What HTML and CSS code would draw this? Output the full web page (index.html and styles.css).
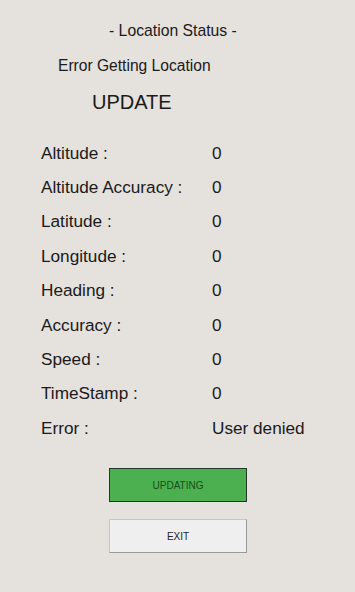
FILE: index.html
```html
<!DOCTYPE html>
<html>
<head>
<meta charset="utf-8">
<link rel="stylesheet" href="styles.css">
</head>
<body>
<div class="page">
  <div class="title">- Location Status -</div>
  <div class="status">Error Getting Location</div>
  <div class="update">UPDATE</div>
  <div class="rows">
    <div class="row"><span class="label">Altitude :</span><span class="value">0</span></div>
    <div class="row"><span class="label">Altitude Accuracy :</span><span class="value">0</span></div>
    <div class="row"><span class="label">Latitude :</span><span class="value">0</span></div>
    <div class="row"><span class="label">Longitude :</span><span class="value">0</span></div>
    <div class="row"><span class="label">Heading :</span><span class="value">0</span></div>
    <div class="row"><span class="label">Accuracy :</span><span class="value">0</span></div>
    <div class="row"><span class="label">Speed :</span><span class="value">0</span></div>
    <div class="row"><span class="label">TimeStamp :</span><span class="value">0</span></div>
    <div class="row"><span class="label">Error :</span><span class="value">User denied</span></div>
  </div>
  <div class="buttons">
    <button class="btn btn-green">UPDATING</button>
    <button class="btn btn-light">EXIT</button>
  </div>
</div>
</body>
</html>
```

FILE: styles.css
```css
html, body {
  margin: 0;
  padding: 0;
  background: #e5e1dd;
}
body {
  font-family: "Liberation Sans", Arial, sans-serif;
  color: #1a1a1a;
  width: 355px;
  height: 592px;
}
.page {
  display: flex;
  flex-direction: column;
}
.title {
  font-size: 15.75px;
  line-height: 20px;
  margin-top: 21px;
  padding-left: 109px;
}
.status {
  font-size: 15.6px;
  line-height: 20px;
  margin-top: 15px;
  padding-left: 58px;
}
.update {
  font-size: 20px;
  line-height: 24px;
  margin-top: 14px;
  padding-left: 92px;
}
.rows {
  margin-top: 22px;
  display: flex;
  flex-direction: column;
}
.row {
  height: 34.375px;
  display: flex;
  align-items: center;
  font-size: 17.2px;
  padding-left: 41px;
}
.label {
  width: 171px;
}
.value {
  flex: 1;
}
.buttons {
  margin-top: 23px;
  display: flex;
  flex-direction: column;
  align-items: flex-start;
  padding-left: 109px;
  gap: 17px;
}
.btn {
  width: 138px;
  height: 34px;
  font-family: "Liberation Sans", Arial, sans-serif;
  font-size: 10px;
  padding: 0;
  margin: 0;
}
.btn-green {
  background: #4caf50;
  border: 1px solid #25352a;
  color: #17501a;
}
.btn-light {
  background: #efefef;
  border: 1px solid #c6c6c6;
  border-right-color: #9a9a9a;
  border-bottom-color: #9a9a9a;
  color: #222;
}
```
